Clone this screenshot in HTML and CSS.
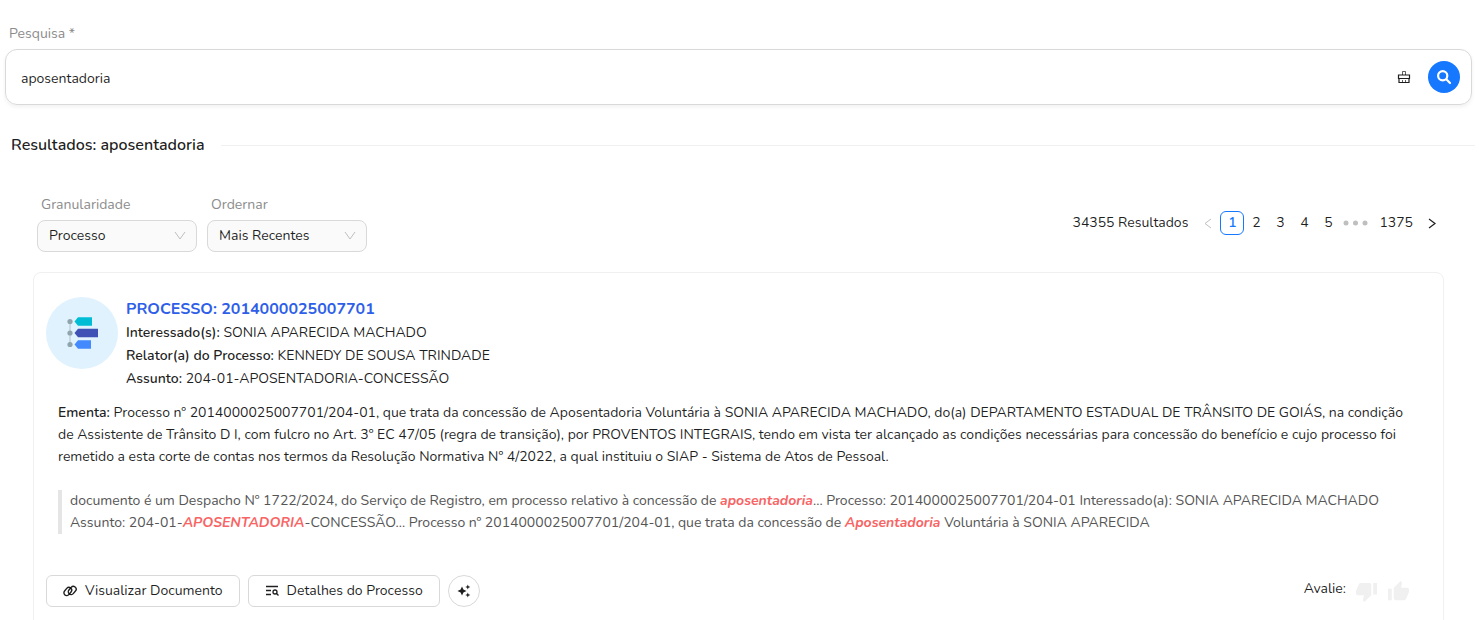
FILE: index.html
```html
<!DOCTYPE html>
<html lang="pt-BR">
<head>
    <meta charset="UTF-8">
    <meta name="viewport" content="width=device-width, initial-scale=1.0">
    <title>Pesquisa</title>
    <link rel="stylesheet" href="styles.css">
</head>
<body>

<!-- Pesquisa -->
<form class="search">
    <label class="field-label" for="pesquisa">Pesquisa *</label>
    <div class="search-box">
        <input class="search-input" type="text" id="pesquisa" value="aposentadoria">
        <button class="clear-button" type="button" aria-label="Limpar">
            <svg width="14" height="14" viewBox="0 0 14 14" fill="none" stroke="currentColor">
                <path stroke-width="1.200" d="M1.500 8.500v-3.500h11v3.500zM2 8.500v4h10v-4"/>
                <path d="M5.500 5V1.500h3V5M5.500 10v2.500M8.500 10v2.500" opacity="0.700"/>
            </svg>
        </button>
        <button class="search-button" type="submit" aria-label="Pesquisar">
            <svg width="16" height="16" viewBox="0 0 16 16" fill="none" stroke="currentColor" stroke-width="2.200" stroke-linecap="round">
                <circle cx="6.700" cy="6.700" r="4.600"/>
                <path d="M10.300 10.300l3.700 3.700"/>
            </svg>
        </button>
    </div>
</form>

<h2 class="divider">Resultados: aposentadoria</h2>

<main class="results">
    <!-- Filtros e paginação -->
    <div class="toolbar">
        <div class="filters">
            <div class="filter">
                <label class="field-label" for="granularidade">Granularidade</label>
                <div class="select-box">
                    <select id="granularidade">
                        <option>Processo</option>
                    </select>
                    <svg class="arrow" width="12" height="12" viewBox="0 0 12 12" fill="none" stroke="currentColor">
                        <path d="M1 2l5 7 5-7"/>
                    </svg>
                </div>
            </div>
            <div class="filter">
                <label class="field-label" for="ordenar">Ordernar</label>
                <div class="select-box">
                    <select id="ordenar">
                        <option>Mais Recentes</option>
                    </select>
                    <svg class="arrow" width="12" height="12" viewBox="0 0 12 12" fill="none" stroke="currentColor">
                        <path d="M1 2l5 7 5-7"/>
                    </svg>
                </div>
            </div>
        </div>
        <nav class="pagination" aria-label="Paginação">
            <span class="total">34355 Resultados</span>
            <button class="page" type="button" disabled aria-label="Anterior">
                <svg width="12" height="12" viewBox="0 0 12 12" fill="none" stroke="currentColor"><path d="M9 2L3 6.500 9 11"/></svg>
            </button>
            <a class="page active" href="#">1</a>
            <a class="page" href="#">2</a>
            <a class="page" href="#">3</a>
            <a class="page" href="#">4</a>
            <a class="page" href="#">5</a>
            <button class="page more" type="button" aria-label="Próximas 5 páginas">
                <svg width="26" height="6" viewBox="0 0 26 6" fill="currentColor">
                    <circle cx="3" cy="3" r="2.500"/><circle cx="12.500" cy="3" r="2.500"/><circle cx="22" cy="3" r="2.500"/>
                </svg>
            </button>
            <a class="page last" href="#">1375</a>
            <button class="page" type="button" aria-label="Próxima">
                <svg width="12" height="12" viewBox="0 0 12 12" fill="none" stroke="currentColor" stroke-width="1.200"><path d="M3 2l6 4.500L3 11"/></svg>
            </button>
        </nav>
    </div>

    <!-- Processo -->
    <article class="card">
        <header class="card-header">
            <div class="avatar">
                <svg width="36" height="34" viewBox="0 0 36 34">
                    <path d="M6 5v24" stroke="#b8c8d0" stroke-width="1.200"/>
                    <g fill="#90a4ae"><circle cx="6" cy="5.500" r="2.600"/><circle cx="6" cy="17" r="2.600"/><circle cx="6" cy="28.500" r="2.600"/></g>
                    <path fill="#00bcd4" d="M10.500 5.500L14 1.300h14v8.400H14z"/>
                    <path fill="#3f51b5" d="M10.500 17L14 12.800h20v8.400H14z"/>
                    <path fill="#448aff" d="M10.500 28.500L14 24.300h13v8.400H14z"/>
                </svg>
            </div>
            <div class="info">
                <h3><a href="#">PROCESSO: 2014000025007701</a></h3>
                <p><b>Interessado(s):</b> SONIA APARECIDA MACHADO</p>
                <p><b>Relator(a) do Processo:</b> KENNEDY DE SOUSA TRINDADE</p>
                <p><b>Assunto:</b> 204-01-APOSENTADORIA-CONCESSÃO</p>
            </div>
        </header>

        <p class="ementa"><b>Ementa:</b> Processo nº 2014000025007701/204-01, que trata da concessão de Aposentadoria Voluntária à SONIA APARECIDA MACHADO, do(a) DEPARTAMENTO ESTADUAL DE TRÂNSITO DE GOIÁS, na condição de Assistente de Trânsito D I, com fulcro no Art. 3º EC 47/05 (regra de transição), por PROVENTOS INTEGRAIS, tendo em vista ter alcançado as condições necessárias para concessão do benefício e cujo processo foi remetido a esta corte de contas nos termos da Resolução Normativa Nº 4/2022, a qual instituiu o SIAP - Sistema de Atos de Pessoal.</p>

        <blockquote class="excerpt">documento é um Despacho Nº 1722/2024, do Serviço de Registro, em processo relativo à concessão de <em>aposentadoria</em>... Processo: 2014000025007701/204-01 Interessado(a): SONIA APARECIDA MACHADO Assunto: 204-01-<em>APOSENTADORIA</em>-CONCESSÃO... Processo nº 2014000025007701/204-01, que trata da concessão de <em>Aposentadoria</em> Voluntária à SONIA APARECIDA</blockquote>

        <footer class="card-footer">
            <button class="btn" type="button">
                <svg width="14" height="14" viewBox="0 0 14 14" fill="none" stroke="currentColor" stroke-width="1.400">
                    <rect x="0.300" y="4.700" width="9" height="5.600" rx="2.800" transform="rotate(-50 4.800 7.500)"/>
                    <rect x="4.700" y="3.700" width="9" height="5.600" rx="2.800" transform="rotate(-50 9.200 6.500)"/>
                </svg>
                Visualizar Documento
            </button>
            <button class="btn" type="button">
                <svg width="14" height="14" viewBox="0 0 14 14" fill="none" stroke="currentColor" stroke-width="1.300">
                    <path d="M1 2.500h12M1 6.500h5M1 10.500h5M11.500 9.500l2 2"/>
                    <circle cx="10" cy="8" r="2"/>
                </svg>
                Detalhes do Processo
            </button>
            <button class="btn round" type="button" aria-label="Resumo">
                <svg width="14" height="14" viewBox="0 0 14 14" fill="currentColor">
                    <path d="M5 2.500l1.400 3.100L9.500 7 6.400 8.400 5 11.500 3.600 8.400.5 7l3.100-1.400z"/>
                    <path d="M10.800.5l.7 1.800 1.800.7-1.800.7-.7 1.800-.7-1.800L8.300 3l1.800-.7zM10.800 8.500l.7 1.800 1.800.7-1.800.7-.7 1.800-.7-1.800-1.800-.7 1.800-.7z"/>
                </svg>
            </button>
            <div class="rating">
                <span>Avalie:</span>
                <button type="button" aria-label="Não gostei">
                    <svg width="23" height="23" viewBox="0 0 24 24" fill="currentColor"><path d="M15 3H6c-.83 0-1.540.5-1.840 1.220l-3.020 7.050c-.09.23-.14.470-.14.730v2c0 1.100.9 2 2 2h6.310l-.95 4.570-.03.320c0 .41.170.79.440 1.060L9.830 23l6.590-6.590c.36-.36.580-.86.580-1.410V5c0-1.100-.9-2-2-2zm4 0v12h4V3h-4z"/></svg>
                </button>
                <button type="button" aria-label="Gostei">
                    <svg width="23" height="23" viewBox="0 0 24 24" fill="currentColor"><path d="M1 21h4V9H1v12zm22-11c0-1.100-.9-2-2-2h-6.310l.95-4.570.03-.32c0-.41-.17-.79-.44-1.060L14.170 1 7.590 7.590C7.220 7.950 7 8.450 7 9v10c0 1.100.9 2 2 2h9c.83 0 1.540-.5 1.840-1.220l3.020-7.050c.09-.23.14-.47.14-.73v-2z"/></svg>
                </button>
            </div>
        </footer>
    </article>
</main>

</body>
</html>
```
FILE: styles.css
```css
* {
    box-sizing: border-box;
}

body {
    margin: 0;
    padding: 23px 4px 0 5px;
    background: #fff;
    color: rgba(0, 0, 0, 0.88);
    font-family: Nunito, "Noto Sans", sans-serif;
    font-size: 14px;
    line-height: 22px;
}

h2, h3, p, blockquote {
    margin: 0;
}

button, input, select {
    font: inherit;
    color: inherit;
}

button {
    display: inline-flex;
    align-items: center;
    justify-content: center;
    padding: 0;
    border: none;
    background: none;
    cursor: pointer;
}

a {
    color: inherit;
    text-decoration: none;
}

b {
    font-weight: 600;
}

.field-label {
    display: block;
    padding-left: 4px;
    color: #8c8c8c;
}

/* Pesquisa */
.search {
    margin-right: 3px;
}

.search-box {
    display: flex;
    align-items: center;
    gap: 12px;
    height: 56px;
    margin-top: 4px;
    padding: 0 11px 0 15px;
    border: 1px solid #d9d9d9;
    border-radius: 12px;
    box-shadow: 0 2px 4px rgba(0, 0, 0, 0.06);
}

.search-input {
    flex: 1;
    min-width: 0;
    height: 32px;
    padding: 2px 0 0;
    border: none;
    outline: none;
    background: none;
}

.clear-button {
    width: 24px;
    height: 24px;
}

.search-button {
    width: 32px;
    height: 32px;
    border-radius: 50%;
    background: #1677ff;
    color: #fff;
}

/* Título com linha */
.divider {
    display: flex;
    align-items: center;
    gap: 16px;
    margin: 28px 0 0 6px;
    font-size: 16px;
    font-weight: 600;
    line-height: 24px;
}

.divider::after {
    content: "";
    flex: 1;
    border-top: 1px solid #f0f0f0;
}

.results {
    padding: 37px 31px 0 28px;
}

/* Filtros */
.toolbar {
    display: flex;
    align-items: center;
    justify-content: space-between;
    padding-left: 4px;
}

.filters {
    display: flex;
    gap: 10px;
}

.filter {
    width: 160px;
}

.select-box {
    position: relative;
    margin-top: 4px;
}

.select-box select {
    width: 100%;
    height: 32px;
    padding: 0 28px 0 11px;
    border: 1px solid #d9d9d9;
    border-radius: 8px;
    background: #fafafa;
    appearance: none;
}

.select-box .arrow {
    position: absolute;
    top: 10px;
    right: 11px;
    color: #bfbfbf;
    pointer-events: none;
}

/* Paginação */
.pagination {
    display: flex;
    align-items: center;
}

.total {
    margin-right: 8px;
}

.page {
    display: inline-flex;
    align-items: center;
    justify-content: center;
    min-width: 24px;
    height: 24px;
    border-radius: 6px;
}

.page.active {
    border: 1px solid #1677ff;
    color: #1677ff;
    font-weight: 600;
}

.page:disabled,
.page.more {
    color: #bfbfbf;
}

.page.more {
    width: 32px;
}

.page.last {
    padding: 0 7px;
}

/* Processo */
.card {
    margin-top: 20px;
    padding: 24px 12px;
    border: 1px solid #f0f0f0;
    border-radius: 8px;
}

.card-header {
    display: flex;
    gap: 8px;
}

.avatar {
    display: flex;
    align-items: center;
    justify-content: center;
    flex: none;
    width: 72px;
    height: 72px;
    border-radius: 50%;
    background: #e0f2fe;
}

.info {
    line-height: 23px;
}

.info h3 {
    color: #2f5fe8;
    font-size: 16px;
    font-weight: 700;
    line-height: 24px;
}

.ementa {
    margin: 12px 12px 0;
    padding-right: 16px;
}

.excerpt {
    margin: 22px 12px 0;
    padding: 0 16px 0 8px;
    border-left: 4px solid #e5e5e5;
    color: #555;
}

.excerpt em {
    color: #f86464;
    font-weight: 700;
}

.card-footer {
    display: flex;
    align-items: center;
    gap: 8px;
    margin-top: 41px;
}

.btn {
    gap: 8px;
    height: 32px;
    padding: 0 16px;
    border: 1px solid #d9d9d9;
    border-radius: 6px;
}

.btn.round {
    width: 32px;
    padding: 0;
    border-radius: 50%;
}

.rating {
    display: flex;
    align-items: center;
    gap: 9px;
    margin: 0 21px 0 auto;
}

.rating span {
    padding-bottom: 4px;
}

.rating button {
    color: #f0f0f0;
}
```
